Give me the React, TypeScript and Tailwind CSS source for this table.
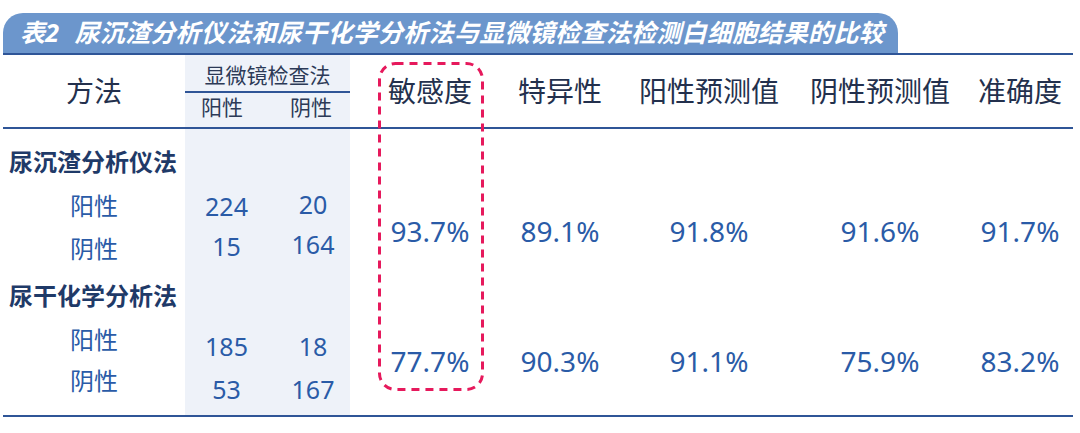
import React from 'react';

const rows = [
  {
    group: '尿沉渣分析仪法',
    pos: ['224', '20'],
    neg: ['15', '164'],
    stats: ['93.7%', '89.1%', '91.8%', '91.6%', '91.7%'],
  },
  {
    group: '尿干化学分析法',
    pos: ['185', '18'],
    neg: ['53', '167'],
    stats: ['77.7%', '90.3%', '91.1%', '75.9%', '83.2%'],
  },
];

const statCols = ['col-start-4', 'col-start-5', 'col-start-6', 'col-start-7', 'col-start-8 pl-[15px]'];

const App = () => {
  const g1 = rows[0];
  const g2 = rows[1];

  return (
    <div className="w-[1080px] h-[433px] overflow-hidden bg-white pt-[13px] font-['Noto_Sans','Noto_Sans_CJK_SC',sans-serif]">
      {/* title tab */}
      <div className="ml-[3px] flex h-[40px] w-[895px] items-center rounded-t-[20px] bg-[#6c96cc] pl-[17px] text-[25px] font-bold italic tracking-[0.3px] text-white">
        <span>表2</span>
        <span className="ml-[15px]">尿沉渣分析仪法和尿干化学分析法与显微镜检查法检测白细胞结果的比较</span>
      </div>
      <div className="ml-[3px] h-[2px] w-[1070px] bg-[#2f5597]" />

      {/* table */}
      <div className="relative ml-[3px] grid w-[1070px] grid-cols-[182px_83px_82px_160px_100px_198px_144px_121px] grid-rows-[36px_2px_34px_2px_55px_44px_41px_53px_35px_48px_10px_2px]">
        {/* shaded count columns */}
        <div className="col-start-2 col-span-2 row-start-1 row-end-12 bg-[#eef2f9]" />

        {/* header */}
        <div className="col-start-1 row-start-1 row-span-3 flex items-center justify-center text-[28px] text-[#23304d]">方法</div>
        <div className="col-start-2 col-span-2 row-start-1 flex items-center justify-center pt-[6px] text-[21px] text-[#2c3a57]">显微镜检查法</div>
        <div className="col-start-2 col-span-2 row-start-2 bg-[#2f5597]" />
        <div className="col-start-2 row-start-3 flex items-center justify-center pb-[5px] pr-[9px] text-[21px] text-[#2c3a57]">阳性</div>
        <div className="col-start-3 row-start-3 flex items-center justify-center pb-[5px] pl-[4px] text-[21px] text-[#2c3a57]">阴性</div>
        {['敏感度', '特异性', '阳性预测值', '阴性预测值', '准确度'].map((h, i) => (
          <div key={h} className={`${statCols[i]} row-start-1 row-span-3 flex items-center justify-center text-[28px] text-[#23304d]`}>
            {h}
          </div>
        ))}
        <div className="col-span-full row-start-4 bg-[#2f5597]" />

        {/* group 1 */}
        <div className="col-start-1 row-start-5 flex items-center pl-[6px] pt-[11px] text-[24px] font-bold text-[#1f3a68]">{g1.group}</div>
        <div className="col-start-1 row-start-6 flex items-center justify-center text-[24px] text-[#2a5ba7]">阳性</div>
        <div className="col-start-1 row-start-7 flex items-center justify-center text-[24px] text-[#2a5ba7]">阴性</div>
        <div className="col-start-2 row-start-6 flex items-center justify-center pt-[2px] text-[25px] text-[#2a5ba7]">{g1.pos[0]}</div>
        <div className="col-start-3 row-start-6 flex items-center justify-center pb-[3px] pl-[8px] text-[25px] text-[#2a5ba7]">{g1.pos[1]}</div>
        <div className="col-start-2 row-start-7 flex items-center justify-center pb-[3px] text-[25px] text-[#2a5ba7]">{g1.neg[0]}</div>
        <div className="col-start-3 row-start-7 flex items-center justify-center pb-[8px] pl-[8px] text-[25px] text-[#2a5ba7]">{g1.neg[1]}</div>
        {g1.stats.map((s, i) => (
          <div key={s + i} className={`${statCols[i]} row-start-6 row-span-2 flex items-center justify-center pt-[9px] text-[28px] text-[#2a5ba7]`}>
            {s}
          </div>
        ))}

        {/* group 2 */}
        <div className="col-start-1 row-start-8 flex items-center pl-[6px] text-[24px] font-bold text-[#1f3a68]">{g2.group}</div>
        <div className="col-start-1 row-start-9 flex items-center justify-center text-[24px] text-[#2a5ba7]">阳性</div>
        <div className="col-start-1 row-start-10 flex items-center justify-center text-[24px] text-[#2a5ba7]">阴性</div>
        <div className="col-start-2 row-start-9 flex items-center justify-center pt-[15px] text-[25px] text-[#2a5ba7]">{g2.pos[0]}</div>
        <div className="col-start-3 row-start-9 flex items-center justify-center pt-[15px] pl-[8px] text-[25px] text-[#2a5ba7]">{g2.pos[1]}</div>
        <div className="col-start-2 row-start-10 flex items-center justify-center pt-[17px] text-[25px] text-[#2a5ba7]">{g2.neg[0]}</div>
        <div className="col-start-3 row-start-10 flex items-center justify-center pt-[17px] pl-[8px] text-[25px] text-[#2a5ba7]">{g2.neg[1]}</div>
        {g2.stats.map((s, i) => (
          <div key={s + i} className={`${statCols[i]} row-start-9 row-span-2 flex items-center justify-center pb-[5px] text-[28px] text-[#2a5ba7]`}>
            {s}
          </div>
        ))}

        <div className="col-span-full row-start-12 bg-[#2f5597]" />

        {/* highlight around sensitivity column */}
        <svg className="pointer-events-none absolute left-[375px] top-[7px]" width="106" height="329" viewBox="0 0 106 329">
          <rect x="1.5" y="1.5" width="103" height="326" rx="16" fill="none" stroke="#e6195c" strokeWidth="3" strokeDasharray="8 6" />
        </svg>
      </div>
    </div>
  );
};

export default App;
